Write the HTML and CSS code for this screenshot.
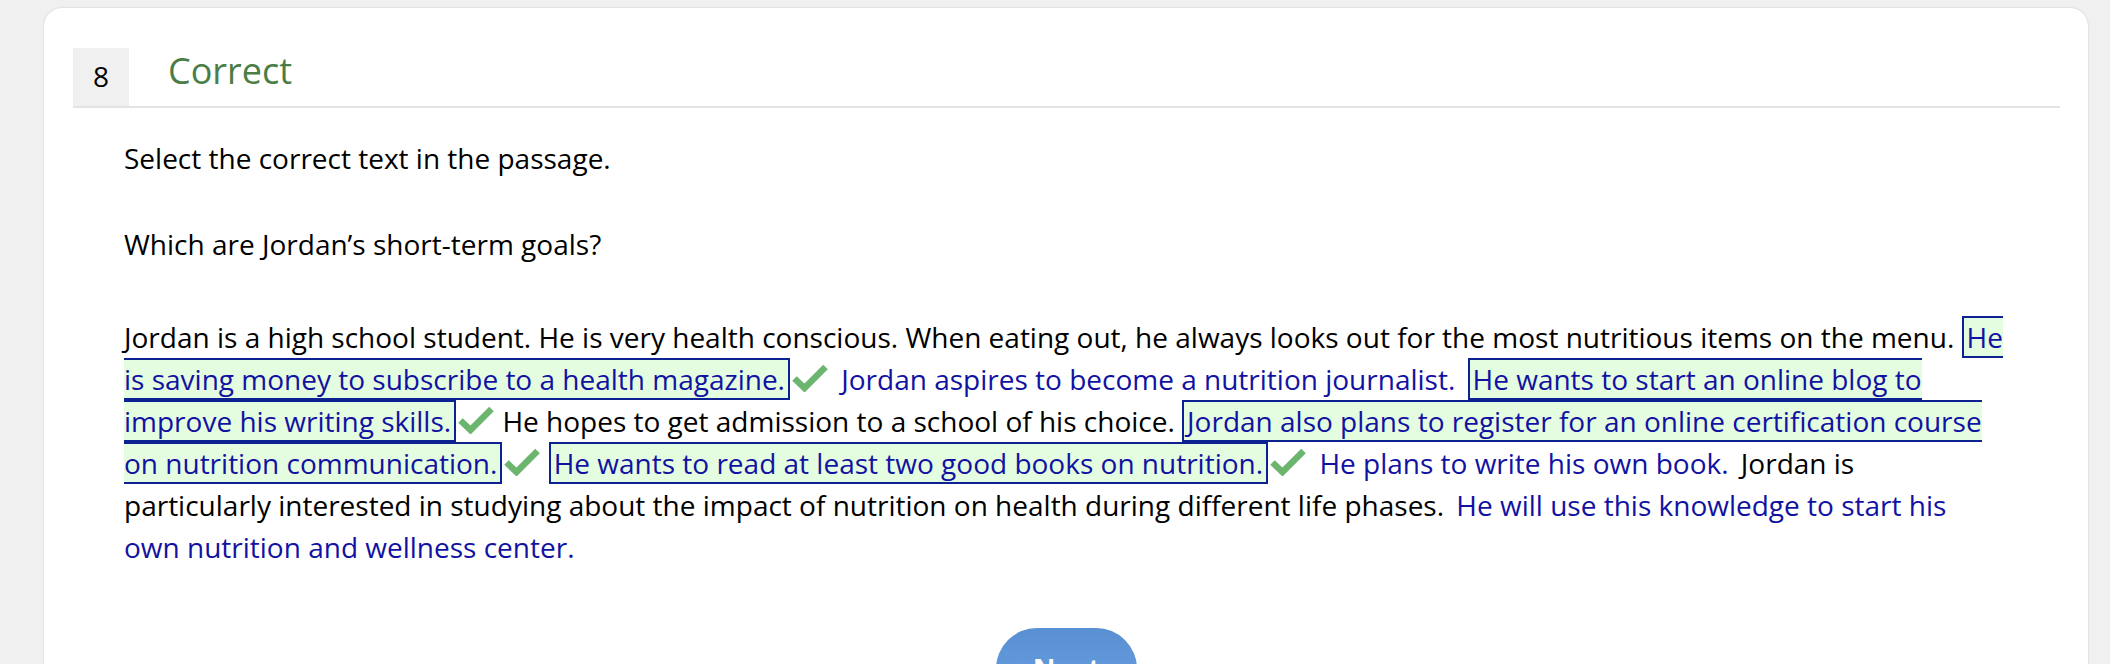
FILE: index.html
```html
<!DOCTYPE html>
<html lang="en">
<head>
<meta charset="utf-8">
<title>Question 8</title>
<link rel="stylesheet" href="styles.css">
</head>
<body>
<main class="card">
  <header class="q-head">
    <span class="q-num">8</span>
    <h1 class="q-status">Correct</h1>
  </header>
  <section class="q-body">
    <p class="prompt">Select the correct text in the passage.</p>
    <p class="question">Which are Jordan’s short-term goals?</p>
    <p class="passage">Jordan is a high school student. He is very health conscious. When eating out, he always looks out for the most nutritious items on the menu. <span class="opt sel">He is saving money to subscribe to a health magazine.</span><svg class="check" viewBox="0 0 36 28" aria-hidden="true"><polyline points="2.5,14.5 12.5,24 33.5,3"/></svg> <span class="opt">Jordan aspires to become a nutrition journalist.</span> <span class="opt sel">He wants to start an online blog to improve his writing skills.</span><svg class="check" viewBox="0 0 36 28" aria-hidden="true"><polyline points="2.5,14.5 12.5,24 33.5,3"/></svg> He hopes to get admission to a school of his choice. <span class="opt sel">Jordan also plans to register for an online certification course on nutrition communication.</span><svg class="check" viewBox="0 0 36 28" aria-hidden="true"><polyline points="2.5,14.5 12.5,24 33.5,3"/></svg> <span class="opt sel">He wants to read at least two good books on nutrition.</span><svg class="check" viewBox="0 0 36 28" aria-hidden="true"><polyline points="2.5,14.5 12.5,24 33.5,3"/></svg> <span class="opt">He plans to write his own book.</span> Jordan is particularly interested in studying about the impact of nutrition on health during different life phases. <span class="opt">He will use this knowledge to start his own nutrition and wellness center.</span></p>
  </section>
  <div class="actions"><button class="next" type="button">Next</button></div>
</main>
</body>
</html>
```

FILE: styles.css
```css
html, body {
  margin: 0;
  height: 100%;
  overflow: hidden;
}

body {
  background: #f0f0f0;
  font-family: "Open Sans", "Noto Sans", sans-serif;
  color: #000;
}

.card {
  box-sizing: border-box;
  margin: 8px 22px 0 44px;
  min-height: 820px;
  padding: 40px 28px 60px 29px;
  background: #fff;
  border-radius: 18px;
  box-shadow: 0 0 2px rgba(0, 0, 0, 0.18);
}

.q-head {
  display: flex;
  align-items: flex-start;
  border-bottom: 2px solid #e3e3e3;
}

.q-num {
  width: 56px;
  height: 58px;
  background: #f0f0f0;
  font-size: 28px;
  line-height: 56px;
  text-align: center;
}

.q-status {
  margin: 1px 0 0 39px;
  font-size: 36px;
  font-weight: 400;
  line-height: 1.2;
  color: #4b7d46;
}

.q-body {
  padding: 29px 55px 0 51px;
  font-size: 28px;
  line-height: 42px;
}

.prompt,
.question,
.passage {
  margin: 0;
}

.question {
  margin-top: 44px;
}

.passage {
  margin-top: 51px;
}

.opt {
  color: #1212a2;
  border: 2px solid transparent;
  padding: 0 3px;
}

.opt.sel {
  background: #e4fcdf;
  border-color: #0c2290;
}

.check {
  width: 36px;
  height: 28px;
  margin: 0 1px 0 2px;
  vertical-align: -2px;
  fill: none;
  stroke: #6cb56e;
  stroke-width: 6.5;
  stroke-linejoin: miter;
  stroke-linecap: butt;
}

.actions {
  margin-top: 60px;
  text-align: center;
}

.next {
  font-family: "Open Sans", "Noto Sans", sans-serif;
  font-size: 28px;
  font-weight: 700;
  line-height: 42px;
  color: #fff;
  border: none;
  border-radius: 42px;
  padding: 20px 37px;
  background: linear-gradient(#5890d3, #6ba2e0);
}
```
